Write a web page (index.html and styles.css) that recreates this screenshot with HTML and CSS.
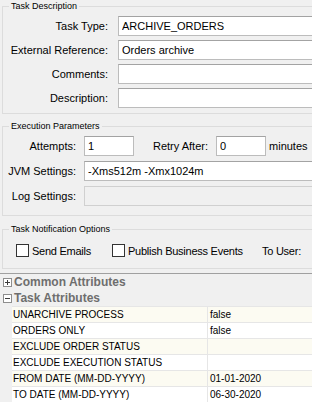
FILE: index.html
```html
<!DOCTYPE html>
<html lang="en">
  <head>
    <meta charset="UTF-8" />
    <title>Task Settings</title>
    <link rel="stylesheet" href="styles.css">
  </head>
  <body>
    <div class="panel">
      <fieldset class="group group-desc">
        <legend>Task Description</legend>
        <div class="row">
          <label class="lbl">Task Type:</label>
          <input class="text wide" type="text" value="ARCHIVE_ORDERS" readonly>
        </div>
        <div class="row">
          <label class="lbl">External Reference:</label>
          <input class="text wide" type="text" value="Orders archive" readonly>
        </div>
        <div class="row">
          <label class="lbl">Comments:</label>
          <input class="text wide" type="text" value="" readonly>
        </div>
        <div class="row">
          <label class="lbl">Description:</label>
          <input class="text wide" type="text" value="" readonly>
        </div>
      </fieldset>

      <fieldset class="group group-exec">
        <legend>Execution Parameters</legend>
        <div class="row">
          <label class="lbl">Attempts:</label>
          <input class="text short" type="text" value="1" readonly>
          <label class="retry">Retry After:</label>
          <input class="text short" type="text" value="0" readonly>
          <span class="unit">minutes</span>
        </div>
        <div class="row">
          <label class="lbl">JVM Settings:</label>
          <input class="text wide" type="text" value="-Xms512m -Xmx1024m" readonly>
        </div>
        <div class="row">
          <label class="lbl">Log Settings:</label>
          <input class="text wide" type="text" value="" disabled>
        </div>
      </fieldset>

      <fieldset class="group group-notify">
        <legend>Task Notification Options</legend>
        <div class="row checks">
          <span class="check check-mail"><span class="box"></span>Send Emails</span>
          <span class="check check-events"><span class="box"></span>Publish Business Events</span>
          <span class="to-user">To User:</span>
        </div>
      </fieldset>
    </div>

    <div class="sep"></div>

    <div class="section">
      <svg class="toggle" width="9" height="9" viewBox="0 0 9 9">
        <rect x="0.5" y="0.5" width="8" height="8" fill="#fff" stroke="#8e8e8e"/>
        <path d="M2 4.5h5M4.5 2v5" stroke="#3c3c3c"/>
      </svg>
      <span>Common Attributes</span>
    </div>
    <div class="section">
      <svg class="toggle" width="9" height="9" viewBox="0 0 9 9">
        <rect x="0.5" y="0.5" width="8" height="8" fill="#fff" stroke="#8e8e8e"/>
        <path d="M2 4.5h5" stroke="#3c3c3c"/>
      </svg>
      <span>Task Attributes</span>
    </div>

    <div class="props">
      <div class="prop"><span class="name">UNARCHIVE PROCESS</span><span class="val">false</span></div>
      <div class="prop"><span class="name">ORDERS ONLY</span><span class="val">false</span></div>
      <div class="prop"><span class="name">EXCLUDE ORDER STATUS</span><span class="val"></span></div>
      <div class="prop"><span class="name">EXCLUDE EXECUTION STATUS</span><span class="val"></span></div>
      <div class="prop"><span class="name">FROM DATE (MM-DD-YYYY)</span><span class="val">01-01-2020</span></div>
      <div class="prop"><span class="name">TO DATE (MM-DD-YYYY)</span><span class="val">06-30-2020</span></div>
    </div>
  </body>
</html>
```

FILE: styles.css
```css
* {
  box-sizing: border-box;
}
body {
  margin: 0;
  width: 312px;
  height: 402px;
  overflow: hidden;
  background-color: #f0f0f0;
  font-family: "Liberation Sans", Arial, sans-serif;
  font-size: 11px;
  color: #000;
}
.panel {
  width: 360px;
}
.group {
  margin: 0 0 0 2px;
  padding: 4px 0 5px 0;
  border: 1px solid #dcdcdc;
  display: flex;
  flex-direction: column;
  gap: 4px;
}
.group legend {
  margin-left: 6px;
  padding: 0 2px;
  font-size: 9px;
  line-height: 12px;
}
.row {
  display: flex;
  align-items: center;
  height: 20px;
  white-space: nowrap;
}
.lbl {
  text-align: right;
}
.group-desc .lbl {
  width: 105px;
  margin-right: 10px;
}
.text {
  height: 20px;
  padding: 0 3px;
  border: 1px solid #bcbcbc;
  border-top-color: #a3a3a3;
  background-color: #fff;
  font: inherit;
  color: #000;
  outline: none;
}
.wide {
  width: 240px;
}
.short {
  width: 50px;
}
.text:disabled {
  background-color: #f0f0f0;
  border-color: #d0d0d0;
}
.group-exec {
  margin-top: 6px;
  padding-bottom: 9px;
  gap: 5px;
}
.group-exec .lbl {
  width: 73px;
  margin-right: 8px;
}
.retry {
  margin-left: 19px;
  margin-right: 8px;
}
.unit {
  margin-left: 3px;
}
.group-notify {
  margin-top: 7px;
  padding: 9px 0 11px 0;
}
.checks {
  height: 13px;
  padding-left: 13px;
  letter-spacing: -0.25px;
}
.check {
  display: flex;
  align-items: center;
}
.check-mail {
  width: 96px;
}
.check-events {
  width: 150px;
}
.check .box {
  width: 13px;
  height: 13px;
  margin-right: 3px;
  border: 1px solid #333;
  background-color: #fff;
}
.sep {
  margin-top: 4px;
  height: 1px;
  background-color: #a0a0a0;
}
.section {
  display: flex;
  align-items: center;
  height: 16px;
  padding-left: 3px;
  font-size: 12px;
  font-weight: bold;
  color: #6e6e6e;
}
.toggle {
  margin-right: 2px;
  flex-shrink: 0;
}
.props {
  margin-left: 12px;
  border-top: 1px solid #e6e6e6;
}
.prop {
  display: flex;
  height: 16px;
  border-bottom: 1px solid #e6e6e6;
  font-size: 10px;
  line-height: 15px;
}
.prop:nth-child(odd) {
  background-color: #fcfbf2;
}
.prop:nth-child(even) {
  background-color: #fff;
}
.name {
  width: 196px;
  padding-left: 1px;
  border-right: 1px solid #e6e6e6;
  white-space: nowrap;
}
.val {
  padding-left: 2px;
}
```
